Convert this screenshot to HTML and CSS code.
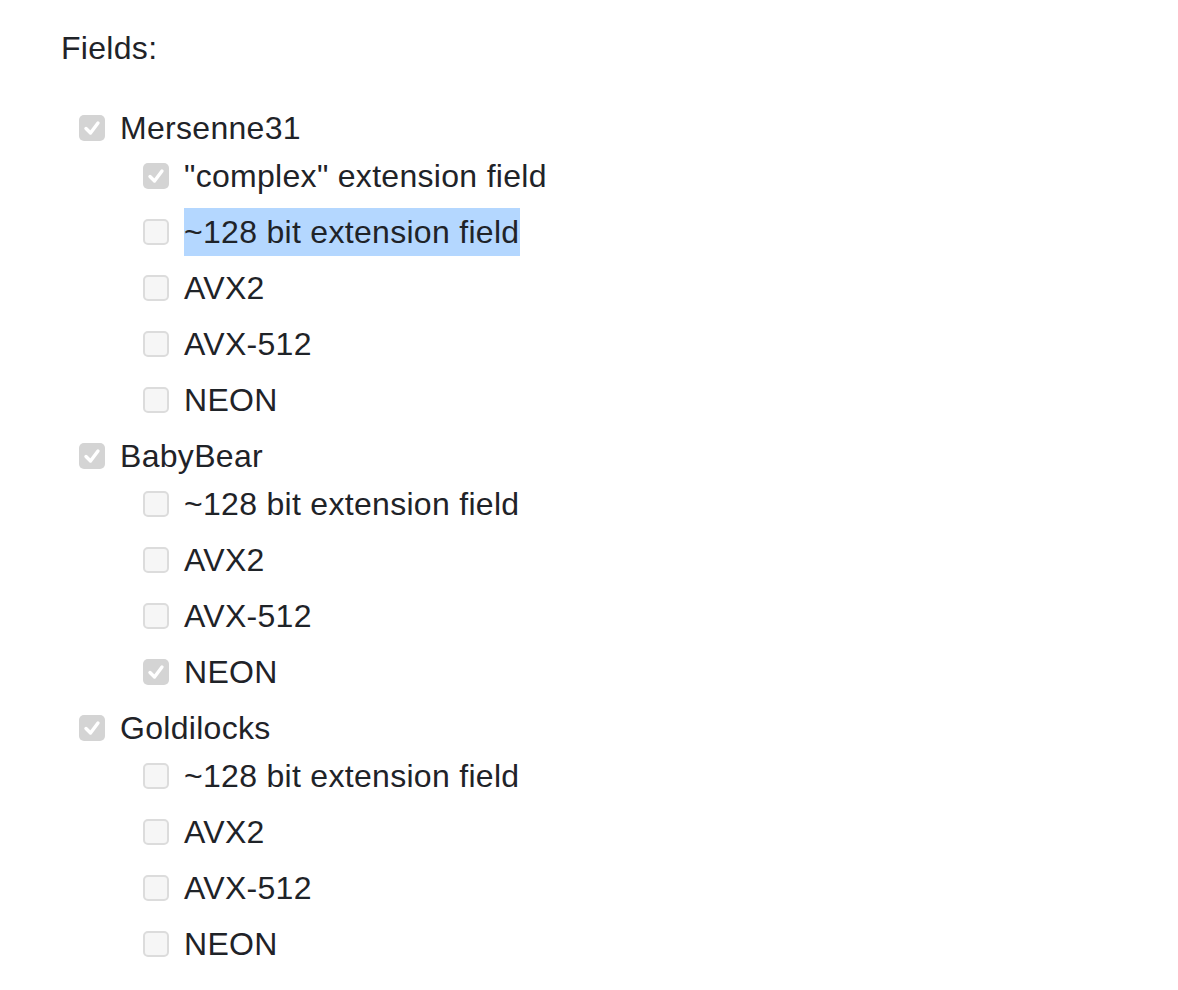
FILE: index.html
```html
<!DOCTYPE html>
<html>
<head>
<meta charset="utf-8">
<link rel="stylesheet" href="styles.css">
</head>
<body>
<div class="page">
  <div class="title">Fields:</div>
  <ul class="fields">
    <li>
      <div class="row"><span class="box on"><svg viewBox="0 0 26 26"><path d="M7 13.5l4.5 4.5 7.5-10"/></svg></span><span>Mersenne31</span></div>
      <ul class="subs">
        <li class="row"><span class="box on"><svg viewBox="0 0 26 26"><path d="M7 13.5l4.5 4.5 7.5-10"/></svg></span><span>"complex" extension field</span></li>
        <li class="row"><span class="box"></span><span class="sel">~128 bit extension field</span></li>
        <li class="row"><span class="box"></span><span>AVX2</span></li>
        <li class="row"><span class="box"></span><span>AVX-512</span></li>
        <li class="row"><span class="box"></span><span>NEON</span></li>
      </ul>
    </li>
    <li>
      <div class="row"><span class="box on"><svg viewBox="0 0 26 26"><path d="M7 13.5l4.5 4.5 7.5-10"/></svg></span><span>BabyBear</span></div>
      <ul class="subs">
        <li class="row"><span class="box"></span><span>~128 bit extension field</span></li>
        <li class="row"><span class="box"></span><span>AVX2</span></li>
        <li class="row"><span class="box"></span><span>AVX-512</span></li>
        <li class="row"><span class="box on"><svg viewBox="0 0 26 26"><path d="M7 13.5l4.5 4.5 7.5-10"/></svg></span><span>NEON</span></li>
      </ul>
    </li>
    <li>
      <div class="row"><span class="box on"><svg viewBox="0 0 26 26"><path d="M7 13.5l4.5 4.5 7.5-10"/></svg></span><span>Goldilocks</span></div>
      <ul class="subs">
        <li class="row"><span class="box"></span><span>~128 bit extension field</span></li>
        <li class="row"><span class="box"></span><span>AVX2</span></li>
        <li class="row"><span class="box"></span><span>AVX-512</span></li>
        <li class="row"><span class="box"></span><span>NEON</span></li>
      </ul>
    </li>
  </ul>
</div>
</body>
</html>
```
FILE: styles.css
```css
html, body {
  margin: 0;
  padding: 0;
  background: #ffffff;
}
.page {
  padding: 24px 0 0 61px;
  font-family: "Liberation Sans", Arial, sans-serif;
  font-size: 32px;
  line-height: 48px;
  letter-spacing: 0.3px;
  color: #1f2328;
}
.title {
  height: 48px;
}
ul {
  list-style: none;
  margin: 0;
  padding: 0;
}
.fields {
  margin-top: 32px;
  padding-left: 18px;
}
.subs {
  padding-left: 64px;
}
.subs > li {
  margin-bottom: 8px;
}
.row {
  display: flex;
  align-items: center;
  height: 48px;
  gap: 15px;
}
.box {
  box-sizing: border-box;
  width: 26px;
  height: 26px;
  border-radius: 5px;
  border: 2px solid #dcdcdc;
  background: #f6f6f6;
  flex: none;
  display: flex;
}
.box.on {
  border: none;
  background: #d4d4d4;
}
.box svg {
  width: 26px;
  height: 26px;
}
.box svg path {
  fill: none;
  stroke: #ffffff;
  stroke-width: 3.4;
  stroke-linecap: round;
  stroke-linejoin: round;
}
.sel {
  background: #b4d7ff;
  padding-right: 1px;
}
```
